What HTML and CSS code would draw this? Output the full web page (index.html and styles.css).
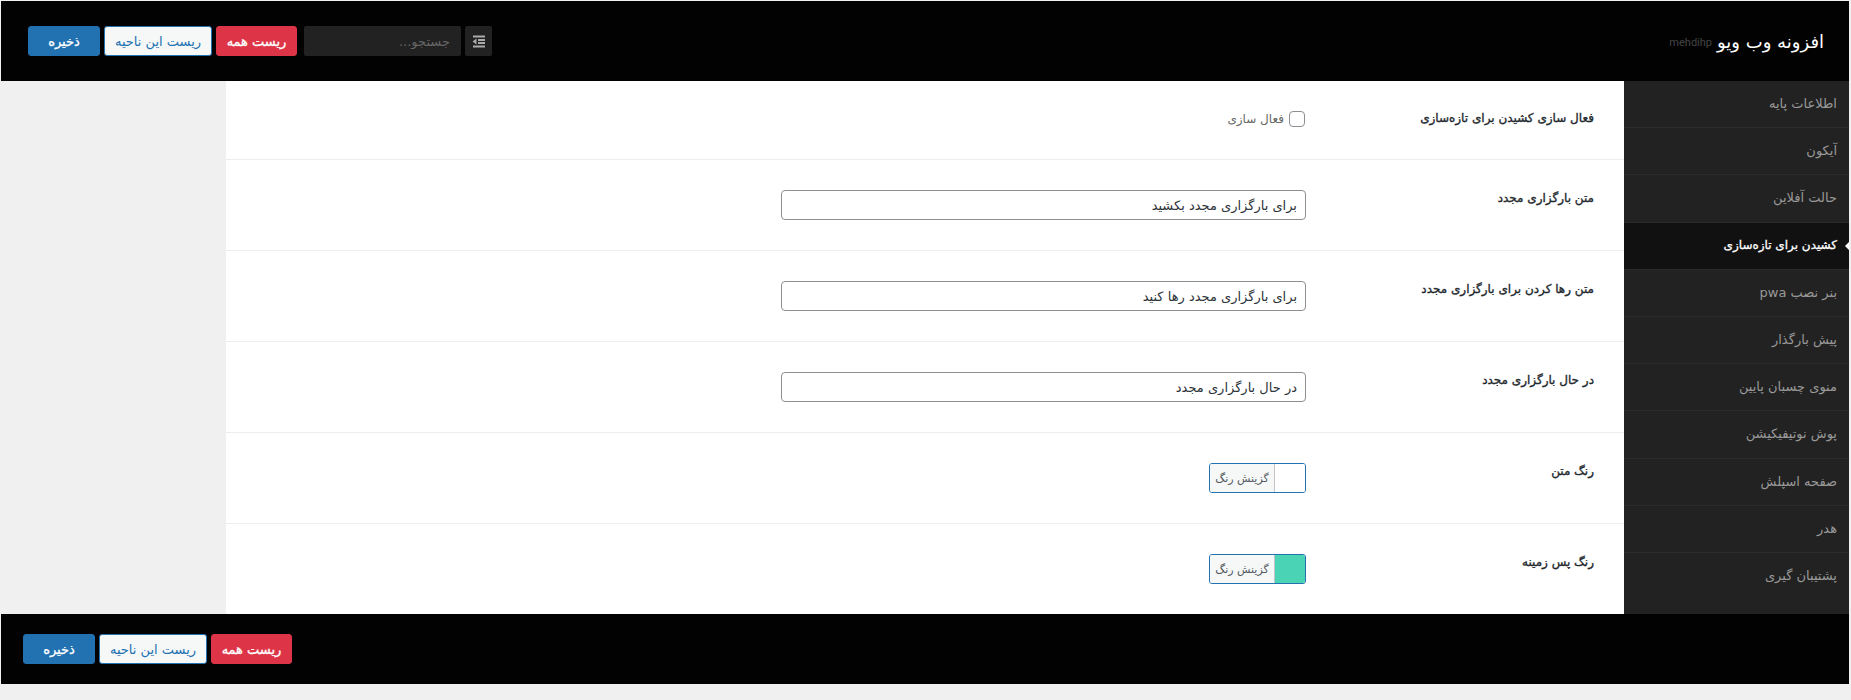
FILE: index.html
```html
<!DOCTYPE html>
<html lang="fa" dir="rtl">
<head>
<meta charset="utf-8">
<title>افزونه وب ویو</title>
<link rel="stylesheet" href="styles.css">
</head>
<body>
<div class="wrap">
  <header class="bar header">
    <div class="brand"><h1>افزونه وب ویو</h1><small>mehdihp</small></div>
    <div class="actions">
      <span class="expand"><svg width="14" height="13" viewBox="0 0 14 13"><path d="M1 0.500h12v2H1zM6 4h7v2H6zM6 7h7v2H6zM1 10.500h12v2H1zM4.500 3.500v6L0.500 6.500z" fill="#aaa"/></svg></span>
      <input class="search" type="text" placeholder="جستجو...">
      <button class="btn red">ریست همه</button>
      <button class="btn light">ریست این ناحیه</button>
      <button class="btn blue">ذخیره</button>
    </div>
  </header>
  <div class="middle">
    <nav class="nav">
      <a>اطلاعات پایه</a>
      <a>آیکون</a>
      <a>حالت آفلاین</a>
      <a class="active">کشیدن برای تازه‌سازی</a>
      <a>بنر نصب pwa</a>
      <a>پیش بارگذار</a>
      <a>منوی چسبان پایین</a>
      <a>پوش نوتیفیکیشن</a>
      <a>صفحه اسپلش</a>
      <a>هدر</a>
      <a>پشتیبان گیری</a>
    </nav>
    <main class="content">
      <section class="row first">
        <h4>فعال سازی کشیدن برای تازه‌سازی</h4>
        <label class="check"><span class="box"></span><span>فعال سازی</span></label>
      </section>
      <section class="row">
        <h4>متن بارگزاری مجدد</h4>
        <input class="text" type="text" value="برای بارگزاری مجدد بکشید">
      </section>
      <section class="row">
        <h4>متن رها کردن برای بارگزاری مجدد</h4>
        <input class="text" type="text" value="برای بارگزاری مجدد رها کنید">
      </section>
      <section class="row">
        <h4>در حال بارگزاری مجدد</h4>
        <input class="text" type="text" value="در حال بارگزاری مجدد">
      </section>
      <section class="row">
        <h4>رنگ متن</h4>
        <span class="color"><i class="swatch white"></i><b>گزینش رنگ</b></span>
      </section>
      <section class="row">
        <h4>رنگ پس زمینه</h4>
        <span class="color"><i class="swatch green"></i><b>گزینش رنگ</b></span>
      </section>
    </main>
    <div class="side"></div>
  </div>
  <footer class="bar footer">
    <div class="actions">
      <button class="btn red">ریست همه</button>
      <button class="btn light">ریست این ناحیه</button>
      <button class="btn blue">ذخیره</button>
    </div>
  </footer>
</div>
</body>
</html>
```
FILE: styles.css
```css
* { box-sizing: border-box; }
html, body { margin: 0; padding: 0; }
body {
  background: #f0f0f1;
  font-family: "DejaVu Sans", "Noto Sans", sans-serif;
  font-size: 12px;
  color: #23282d;
  height: 700px;
  overflow: hidden;
}
.wrap { margin: 1px 2px 0 1px; }
.bar {
  background: #020202;
  display: flex;
  align-items: center;
  justify-content: space-between;
}
.header { height: 80px; padding: 0 25px 0 27px; }
.footer { height: 70px; padding: 0 22px; justify-content: flex-end; }
.brand { display: flex; align-items: center; gap: 5px; }
.brand h1 { margin: 0; font-size: 18px; font-weight: 400; color: #fff; }
.brand small { font-family: Roboto, sans-serif; font-size: 11px; color: #444; margin-top: 2px; }
.actions { display: flex; gap: 4px; align-items: center; }
.expand {
  width: 27px; height: 30px; background: #222; border-radius: 2px;
  display: flex; align-items: center; justify-content: center;
}
.search {
  width: 157px; height: 30px; margin-left: 3px; background: #222; border: 0; border-radius: 2px;
  padding: 0 11px; color: #fff; font: 13px "DejaVu Sans", sans-serif; direction: rtl;
}
.search::placeholder { color: #666; }
.btn {
  height: 30px; border-radius: 3px; font: 13px "DejaVu Sans", sans-serif; padding: 0;
  border: 1px solid #2271b1;
}
.btn.red { width: 81px; background: #dd3547; border-color: #dd3547; color: #fff; -webkit-text-stroke: 0.3px #fff; }
.btn.light { width: 108px; background: #f6f7f7; color: #2271b1; }
.btn.blue { width: 72px; background: #2271b1; color: #fff; -webkit-text-stroke: 0.3px #fff; }
.middle { display: flex; height: 533px; }
.nav { width: 225px; background: #222; flex: none; }
.nav a {
  display: flex; align-items: center; height: 47.200px; padding: 0 12px 1px;
  color: #999; font-size: 13px; border-bottom: 1px solid #2b2b2b; position: relative;
}
.nav a:nth-child(11) { border-bottom: 0; }
.nav a.active { background: #111; color: #fff; font-size: 12px; -webkit-text-stroke: 0.3px #fff; }
.nav a.active::before {
  content: ""; position: absolute; right: 0; top: 50%; margin-top: -4px;
  border: 4px solid transparent; border-right: 0; border-left-color: #fff; transform: scaleX(-1);
}
.content { width: 1398px; background: #fff; flex: none; }
.side { flex: 1; }
.row {
  height: 91px; padding: 30px 30px 0; border-bottom: 1px solid #eee;
  display: flex; gap: 0;
}
.row.first { height: 79px; padding-top: 29px; }
.row:last-child { border-bottom: 0; height: 91px; }
.row h4 { width: 288px; flex: none; margin: -1px 0 0; font-size: 12px; font-weight: 400; color: #23282d; line-height: 18px; -webkit-text-stroke: 0.35px #23282d; }
.check { display: flex; align-items: center; gap: 5px; color: #666; height: 18px; margin-right: 1px; font-size: 12px; }
.box { width: 16px; height: 16px; border: 1px solid #8c8f94; border-radius: 4px; background: #fff; }
.text {
  width: 525px; height: 30px; border: 1px solid #8c8f94; border-radius: 4px; padding: 0 8px;
  background: #fff; color: #2c3338; font: 13px "DejaVu Sans", sans-serif; direction: rtl;
}
.color {
  width: 97px; height: 30px; border: 1px solid #2271b1; border-radius: 3px; display: flex; overflow: hidden;
}
.swatch { width: 31px; flex: none; border-left: 1px solid #c3c4c7; }
.swatch.white { background: #fff; }
.swatch.green { background: #4ad3b4; }
.color b { flex: 1; background: #f6f7f7; color: #50575e; font-weight: 400; font-size: 11px; display: flex; align-items: center; justify-content: center; }
```
